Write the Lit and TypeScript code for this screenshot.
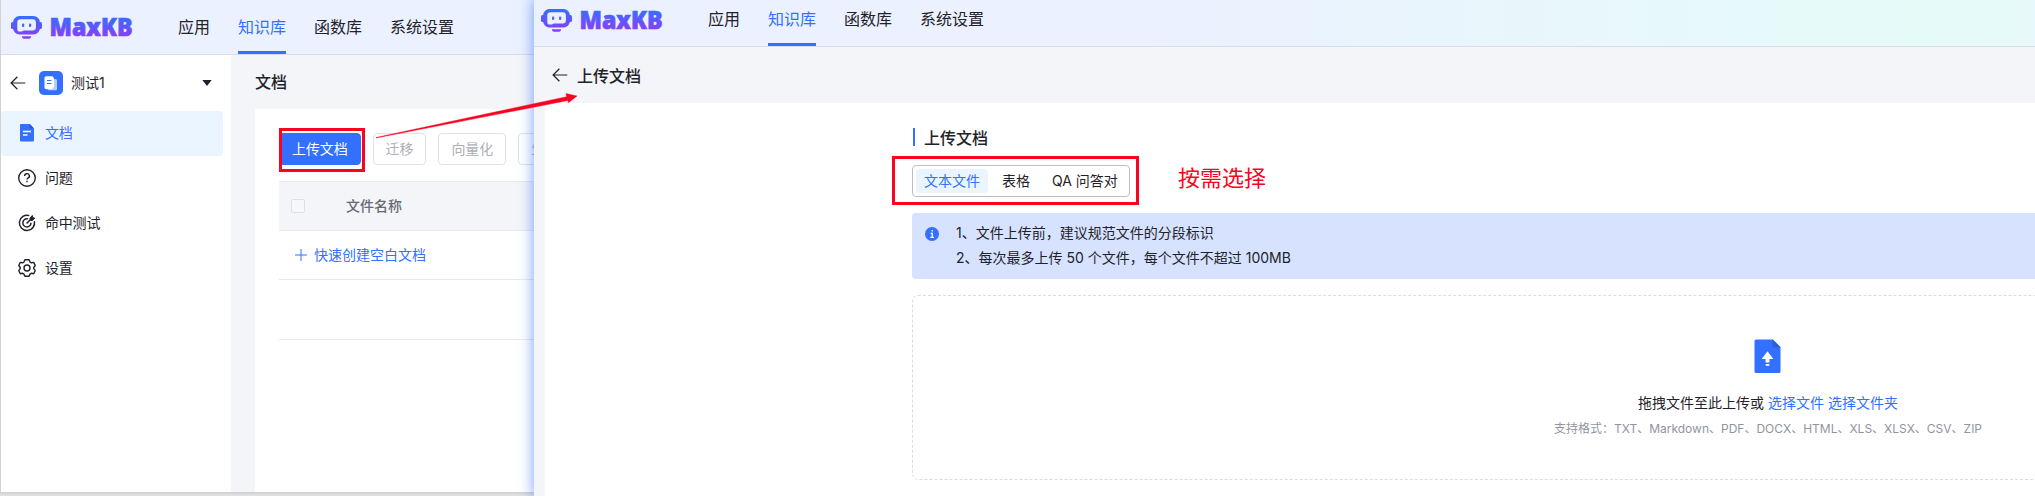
import { LitElement, html, css } from "lit";
import { customElement, property } from "lit/decorators.js";

const backArrow = html`<svg width="16" height="16" viewBox="0 0 16 16" fill="none" stroke="#1f2329" stroke-width="1.2">
  <path d="M15.3 8H1.2M7.4 1.8L1.1 8l6.3 6.2" />
</svg>`;

@customElement("top-bar")
class TopBar extends LitElement {
  @property() items: string[] = ["应用", "知识库", "函数库", "系统设置"];

  static styles = css`
    :host {
      display: flex;
      box-sizing: border-box;
      align-items: stretch;
      flex: none;
      border-bottom: 1px solid #dadde3;
      background: linear-gradient(90deg, #ebf1ff 24.34%, #e5fbf8 56.18%, #f2ebfe 90.18%) 0 0 / 2466px 100% no-repeat;
      font-size: 16px;
      color: #1f2329;
    }
    .logo {
      display: block;
      flex: none;
      align-self: center;
      margin-right: 40px;
      overflow: visible;
    }
    .word {
      font: 900 24.5px "Noto Sans", sans-serif;
    }
    nav {
      display: flex;
      gap: 28px;
    }
    .item {
      display: flex;
      align-items: center;
      white-space: nowrap;
      box-sizing: border-box;
      border-bottom: 3px solid transparent;
      padding-top: 1px;
    }
    :host([compact]) .item {
      padding: 0 0 7px;
    }
    :host([compact]) .logo {
      margin-bottom: 7px;
    }
    .active {
      color: #3370ff;
      border-color: #3370ff;
    }
  `;

  render() {
    return html`
      <svg class="logo" width="128" height="26" viewBox="0 0 128 26">
        <defs>
          <linearGradient id="g" gradientUnits="userSpaceOnUse" x1="0" y1="2" x2="0" y2="24">
            <stop offset="0" stop-color="#3370ff" />
            <stop offset="1" stop-color="#8c3cf7" />
          </linearGradient>
        </defs>
        <g fill="url(#g)">
          <rect x="1" y="8" width="4" height="7" rx="1.6" />
          <rect x="28" y="8" width="4" height="7" rx="1.6" />
          <path fill-rule="evenodd" d="M9.500 2h14a6.500 6.500 0 0 1 6.500 6.500v5.500a6.500 6.500 0 0 1-6.500 6.500H9.500A6.500 6.500 0 0 1 3 14V8.500A6.500 6.500 0 0 1 9.500 2zM10.500 5.300a3.200 3.200 0 0 0-3.200 3.200v6.400A2.600 2.600 0 0 0 10 17.500h2l1.500-1h9.200a3.200 3.200 0 0 0 3.200-3.200V8.500a3.200 3.200 0 0 0-3.200-3.200z" />
          <path d="M12 22.300h9v1.200l-1.500 1.300h-6L12 23.500z" />
          <rect x="12" y="9.500" width="2.200" height="3.500" rx="1" />
          <rect x="19" y="9.500" width="2.200" height="3.500" rx="1" />
        </g>
        <text class="word" x="39.500" y="22" fill="url(#g)" stroke="url(#g)" stroke-width=".7" textLength="83" lengthAdjust="spacingAndGlyphs">MaxKB</text>
      </svg>
      <nav>
        ${this.items.map((t, i) => html`<span class="item ${i === 1 ? "active" : ""}">${t}</span>`)}
      </nav>
    `;
  }
}

@customElement("doc-list-window")
class DocListWindow extends LitElement {
  static styles = css`
    :host {
      display: flex;
      flex-direction: column;
      box-sizing: border-box;
      height: 492px;
      overflow: hidden;
      border-left: 1px solid #d2d2d2;
      background: #f4f5f8;
    }
    top-bar {
      height: 55px;
      padding-left: 9px;
    }
    .body {
      flex: 1;
      display: flex;
      min-height: 0;
    }
    .side {
      width: 230px;
      flex: none;
      background: #fff;
    }
    .kb {
      height: 56px;
      display: flex;
      align-items: center;
      padding: 0 19px 0 9px;
      font-size: 14px;
    }
    .name {
      padding-bottom: 2px;
    }
    .badge {
      margin: 0 8px 0 13px;
    }
    .caret {
      margin-left: auto;
    }
    .entry {
      height: 45px;
      width: 222px;
      box-sizing: border-box;
      display: flex;
      align-items: center;
      gap: 8px;
      padding-left: 16px;
      padding-bottom: 2px;
      font-size: 14px;
      letter-spacing: -0.2px;
      border-radius: 4px;
    }
    .entry svg {
      display: block;
      margin-top: 1px;
    }
    .current {
      background: #ebf5ff;
      color: #3370ff;
    }
    .main {
      flex: 1;
      min-width: 0;
      padding-left: 24px;
      display: flex;
      flex-direction: column;
    }
    .title {
      height: 54px;
      line-height: 55px;
      font-size: 16px;
      font-weight: 500;
    }
    .card {
      flex: 1;
      background: #fff;
      padding: 24px 0 0 24px;
    }
    .buttons {
      display: flex;
      gap: 12px;
      margin-bottom: 16px;
    }
    .btn {
      flex: none;
      height: 32px;
      box-sizing: border-box;
      border: 1px solid #e0e2ea;
      border-radius: 4px;
      line-height: 30px;
      padding: 0 12px;
      font-size: 14px;
      letter-spacing: -0.1px;
      color: #adb0b8;
    }
    .primary {
      background: #3370ff;
      border-color: #3370ff;
      color: #fff;
    }
    .row {
      display: flex;
      align-items: center;
      box-sizing: border-box;
      border-bottom: 1px solid #e7eaf0;
      font-size: 14px;
    }
    .row span {
      padding-bottom: 2px;
    }
    .head {
      height: 50px;
      border-top: 1px solid #e7eaf0;
      background: #f4f5f8;
      color: #646a73;
      font-weight: 500;
      padding-left: 12px;
      gap: 41px;
    }
    .check {
      width: 14px;
      height: 14px;
      box-sizing: border-box;
      border: 1px solid #dcdfe6;
      border-radius: 2px;
      background: #f6f7f9;
    }
    .create {
      height: 49px;
      color: #3370ff;
      padding-left: 16px;
      gap: 7px;
    }
    .blank {
      height: 60px;
    }
  `;

  render() {
    return html`
      <top-bar></top-bar>
      <div class="body">
        <div class="side">
          <div class="kb">
            ${backArrow}
            <svg class="badge" width="24" height="24" viewBox="0 0 24 24">
              <rect width="24" height="24" rx="5" fill="#3370ff" />
              <path d="M11 8h5.500a1.500 1.500 0 0 1 1.500 1.500V18a1.200 1.200 0 0 1-1.200 1.200H9z" fill="#fff" opacity=".65" />
              <path d="M7.200 5.200h6.300l1.500 2v8.600L13 18.300H7.200A1.700 1.700 0 0 1 5.500 16.600V6.900a1.700 1.700 0 0 1 1.700-1.700z" fill="#fff" />
              <path d="M8 9.500h4.500M8 12.500h4.500" stroke="#3370ff" stroke-width="1.100" />
            </svg>
            <span class="name">测试1</span>
            <svg class="caret" width="10" height="6" viewBox="0 0 10 6"><path d="M.3 0h9.400L5 6z" fill="#1f2329" /></svg>
          </div>
          <div class="entry current">
            <svg width="20" height="20" viewBox="0 0 20 20">
              <path d="M4 1h8.800L17 5.400V17.600a1 1 0 0 1-1 1H4a1 1 0 0 1-1-1V2a1 1 0 0 1 1-1z" fill="#3370ff" />
              <path d="M12.500 1L17 5.500h-4.500z" fill="#2457d0" />
              <path d="M6 8.500h8M6 12h4.500" stroke="#fff" stroke-width="1.300" />
            </svg>
            <span class="name">文档</span>
          </div>
          <div class="entry">
            <svg width="20" height="20" viewBox="0 0 20 20" fill="none" stroke="#1f2329" stroke-width="1.400">
              <circle cx="10" cy="10" r="8.300" />
              <path d="M7.600 8a2.400 2.300 0 1 1 3.500 2q-1.100.6-1.100 1.600M10 12.800v1.500" />
            </svg>
            <span class="name">问题</span>
          </div>
          <div class="entry">
            <svg width="20" height="20" viewBox="0 0 20 20" fill="none" stroke="#1f2329" stroke-width="1.500">
              <path d="M12.300 2.600A7.600 7.600 0 1 0 17.400 8.200" />
              <path d="M11 5.900A4.100 4.100 0 1 0 14 9.700" />
              <path d="M9.600 10.500L14 6" />
              <path d="M13 5.100l2.300-2.600.5 2.200 2 .4-2.400 2.400-2.200-.3z" fill="#1f2329" stroke-width="1" />
            </svg>
            <span class="name">命中测试</span>
          </div>
          <div class="entry">
            <svg width="20" height="20" viewBox="0 0 20 20" fill="none" stroke="#1f2329" stroke-width="1.400" stroke-linejoin="round">
              <path d="M7.900 1.700h4.200l.9 2.300 1.300.8 2.400-.4 1.500 3.100-1.400 2v1.200l1.400 2-1.500 3-2.400-.4-1.300.8-.9 2.100H7.900L7 16.100l-1.300-.8-2.400.4-1.500-3 1.400-2V9.500L1.800 7.500l1.500-3.100 2.400.4L7 4z" />
              <circle cx="10" cy="10" r="3" />
            </svg>
            <span class="name">设置</span>
          </div>
        </div>
        <div class="main">
          <div class="title">文档</div>
          <div class="card">
            <div class="buttons">
              <span class="btn primary">上传文档</span>
              <span class="btn">迁移</span>
              <span class="btn">向量化</span>
              <span class="btn">生成问题</span>
            </div>
            <div class="row head"><div class="check"></div><span>文件名称</span></div>
            <div class="row create">
              <svg width="12" height="12" viewBox="0 0 12 12"><path d="M6 0v12M0 6h12" stroke="#3370ff" stroke-width="1" /></svg>
              <span>快速创建空白文档</span>
            </div>
            <div class="row blank"></div>
          </div>
        </div>
      </div>
    `;
  }
}

@customElement("upload-window")
class UploadWindow extends LitElement {
  static styles = css`
    :host {
      display: flex;
      flex-direction: column;
      overflow: hidden;
      background: #f4f5f8;
    }
    top-bar {
      height: 47px;
      padding-left: 6px;
    }
    .crumb {
      height: 56px;
      flex: none;
      display: flex;
      align-items: center;
      gap: 9px;
      padding-left: 18px;
      font-size: 16px;
      font-weight: 500;
    }
    .crumb span {
      padding-bottom: 1px;
    }
    .card {
      flex: 1;
      margin-left: 11px;
      padding: 22px 0 0 367px;
      background: #fff;
      overflow: hidden;
    }
    .section {
      display: flex;
      align-items: center;
      gap: 9px;
      height: 24px;
      font-size: 16px;
      font-weight: 500;
      margin-bottom: 16px;
    }
    .section::before {
      content: "";
      width: 2px;
      height: 18px;
      margin-left: 1px;
      background: #3370ff;
    }
    .tabs {
      display: flex;
      width: 218px;
      height: 32px;
      box-sizing: border-box;
      border: 1px solid #bbbfc4;
      border-radius: 4px;
      padding: 3px;
      gap: 6px;
      font-size: 14px;
      margin-bottom: 16px;
    }
    .tab {
      padding: 0 8px;
      line-height: 24px;
      border-radius: 4px;
      white-space: nowrap;
    }
    .on {
      color: #3370ff;
      background: #ebf5ff;
    }
    .tip {
      display: flex;
      height: 66px;
      width: 1712px;
      box-sizing: border-box;
      padding: 7px 0 0 13px;
      gap: 17px;
      background: #d6e2ff;
      border-radius: 4px;
      font-size: 14px;
      line-height: 25px;
      margin-bottom: 16px;
    }
    .tip svg {
      margin-top: 7px;
    }
    .drop {
      display: flex;
      flex-direction: column;
      align-items: center;
      box-sizing: border-box;
      width: 1712px;
      height: 185px;
      border: 1px dashed #d9dce0;
      border-radius: 6px;
      padding-top: 43px;
      font-size: 14px;
    }
    .drop svg {
      margin-right: 1px;
    }
    .pick {
      display: flex;
      gap: 4px;
      margin-top: 18px;
      line-height: 22px;
    }
    .link {
      color: #3370ff;
    }
    .formats {
      margin-top: 5px;
      line-height: 20px;
      font-size: 12px;
      color: #8f959e;
    }
  `;

  render() {
    return html`
      <top-bar compact></top-bar>
      <div class="crumb">${backArrow}<span>上传文档</span></div>
      <div class="card">
        <div class="section">上传文档</div>
        <div class="tabs">
          <span class="tab on">文本文件</span>
          <span class="tab">表格</span>
          <span class="tab">QA 问答对</span>
        </div>
        <div class="tip">
          <svg width="14" height="14" viewBox="0 0 14 14">
            <circle cx="7" cy="7" r="7" fill="#3370ff" />
            <path d="M7.200 2.900v1.700M5.600 6.400h1.700v4M5.300 10.400h3.600" stroke="#fff" stroke-width="1.300" fill="none" />
          </svg>
          <div>
            <div>1、文件上传前，建议规范文件的分段标识</div>
            <div>2、每次最多上传 50 个文件，每个文件不超过 100MB</div>
          </div>
        </div>
        <div class="drop">
          <svg width="27" height="35" viewBox="0 0 27 35">
            <path d="M2 .5h17L26.500 8v24.500a1.500 1.500 0 0 1-1.500 1.500H2A1.500 1.500 0 0 1 .5 32.500V2A1.500 1.500 0 0 1 2 .5z" fill="#3370ff" />
            <path d="M18.500.5L26.500 8.500h-6.500a1.500 1.500 0 0 1-1.500-1.500z" fill="#2b5fd9" />
            <path d="M13.500 12.300l5.800 7.700h-3.800v3.400h-4V20H7.700z" fill="#fff" />
            <rect x="11.700" y="25" width="3.600" height="1.800" fill="#fff" />
          </svg>
          <div class="pick">
            <span>拖拽文件至此上传或</span>
            <span class="link">选择文件</span>
            <span class="link">选择文件夹</span>
          </div>
          <div class="formats">支持格式：TXT、Markdown、PDF、DOCX、HTML、XLS、XLSX、CSV、ZIP</div>
        </div>
      </div>
    `;
  }
}

@customElement("app-root")
class AppRoot extends LitElement {
  static styles = css`
    :host {
      position: relative;
      display: flex;
      width: 2035px;
      height: 496px;
      overflow: hidden;
      background: linear-gradient(#cfcfcf 492px, #e4e4e4 496px);
      font-family: Inter, "Noto Sans CJK SC", sans-serif;
      color: #1f2329;
    }
    doc-list-window {
      width: 534px;
      flex: none;
    }
    upload-window {
      flex: 1;
      min-width: 0;
      box-shadow: 0 0 13px 1px rgba(51, 112, 255, 0.62);
      z-index: 1;
    }
    .mark {
      position: absolute;
      z-index: 2;
      box-sizing: border-box;
      border: 3px solid #fb0220;
    }
    .button-mark {
      left: 279px;
      top: 128px;
      width: 86px;
      height: 44px;
    }
    .tabs-mark {
      left: 892px;
      top: 156px;
      width: 247px;
      height: 49px;
    }
    .arrow {
      position: absolute;
      z-index: 2;
      left: 370px;
      top: 85px;
    }
    .note {
      position: absolute;
      z-index: 2;
      left: 1178px;
      top: 162px;
      font-size: 22px;
      line-height: 32px;
      color: #fb0220;
    }
  `;

  render() {
    return html`
      <doc-list-window></doc-list-window>
      <upload-window></upload-window>
      <div class="mark button-mark"></div>
      <div class="mark tabs-mark"></div>
      <svg class="arrow" width="215" height="60" viewBox="0 0 215 60">
        <path d="M6 52.500L196.500 11.700 196 8.500 207 11 198.500 17.800 198 15.500 6 53z" fill="#fb0220" stroke="#fb0220" stroke-width=".4" />
      </svg>
      <div class="note">按需选择</div>
    `;
  }
}
